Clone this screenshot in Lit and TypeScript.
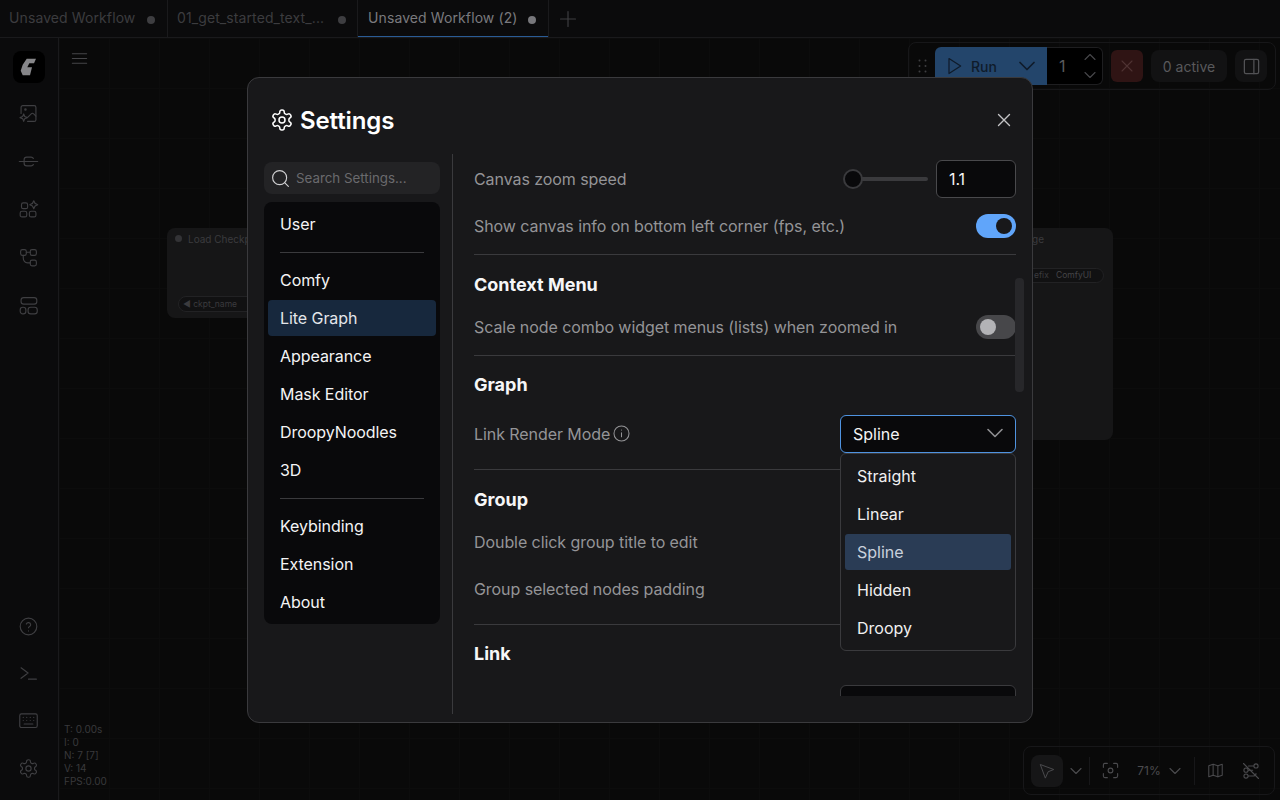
import { LitElement, html, css, svg } from "lit";
import { customElement } from "lit/decorators.js";

const ic = (body: unknown, size = 21, sw = 1.3) => html`<svg class="ic" width=${size} height=${size} viewBox="0 0 24 24" fill="none" stroke="currentColor" stroke-width=${sw} stroke-linecap="round" stroke-linejoin="round">${body}</svg>`;

const gear = svg`<path d="M12.22 2h-.44a2 2 0 0 0-2 2v.18a2 2 0 0 1-1 1.73l-.43.25a2 2 0 0 1-2 0l-.15-.08a2 2 0 0 0-2.73.73l-.22.38a2 2 0 0 0 .73 2.73l.15.1a2 2 0 0 1 1 1.72v.51a2 2 0 0 1-1 1.74l-.15.09a2 2 0 0 0-.73 2.73l.22.38a2 2 0 0 0 2.73.73l.15-.08a2 2 0 0 1 2 0l.43.25a2 2 0 0 1 1 1.73V20a2 2 0 0 0 2 2h.44a2 2 0 0 0 2-2v-.18a2 2 0 0 1 1-1.73l.43-.25a2 2 0 0 1 2 0l.15.08a2 2 0 0 0 2.73-.73l.22-.39a2 2 0 0 0-.73-2.73l-.15-.08a2 2 0 0 1-1-1.74v-.5a2 2 0 0 1 1-1.74l.15-.09a2 2 0 0 0 .73-2.73l-.22-.38a2 2 0 0 0-2.73-.73l-.15.08a2 2 0 0 1-2 0l-.43-.25a2 2 0 0 1-1-1.73V4a2 2 0 0 0-2-2z"/><circle cx="12" cy="12" r="3"/>`;
const chevDown = svg`<path d="m6 9 6 6 6-6"/>`;
const chevUp = svg`<path d="m18 15-6-6-6 6"/>`;
const close = svg`<path d="M18 6 6 18M6 6l12 12"/>`;

const menuGroups = [["User"], ["Comfy", "Lite Graph", "Appearance", "Mask Editor", "DroopyNoodles", "3D"], ["Keybinding", "Extension", "About"]];

@customElement("app-root")
export class AppRoot extends LitElement {
  static styles = css`
    :host { display: block; width: 1280px; height: 800px; overflow: hidden; background: #0a0a0b; font-family: Inter, "Liberation Sans", sans-serif; color: #fff; position: relative; }
    .ic { display: block; flex: none; }
    .page { display: flex; flex-direction: column; height: 800px; }
    .tabs { display: flex; height: 38px; box-sizing: border-box; flex: none; border-bottom: 1px solid #1a1a1c; background: #0b0b0c; align-items: stretch; }
    .tab { display: flex; align-items: center; font-size: 14px; letter-spacing: 0.1px; color: #3c3c3f; padding: 0 0 2px 9px; border-right: 1px solid #1a1a1c; box-sizing: border-box; position: relative; }
    .tab .dot { width: 8px; height: 8px; border-radius: 50%; background: #3e3e41; position: absolute; top: 16px; }
    .tab.t1 { width: 168px; } .t1 .dot { left: 147px; }
    .tab.t2 { width: 190px; } .t2 .dot { left: 170px; }
    .tab.t3 { width: 191px; color: #7a7a7e; padding-left: 10px; box-shadow: inset 0 -1px 0 #2a5c96; } .t3 .dot { left: 170px; background: #77777b; }
    .plus { display: flex; align-items: center; margin-left: 9px; color: #3e3e41; }
    .main { flex: 1; display: flex; min-height: 0; }
    .side { width: 58px; flex: none; border-right: 1px solid #1a1a1c; background: #0b0b0c; display: flex; flex-direction: column; align-items: center; padding: 13px 0 8px; color: #3f3f42; }
    .logo { width: 32px; height: 32px; background: #000; border-radius: 8px; display: flex; align-items: center; justify-content: center; margin-left: -1px; margin-bottom: 6px; }
    .sb { height: 48px; display: flex; align-items: center; justify-content: center; margin-left: -1px; flex: none; }
    .sb.low { height: 47.4px; }
    .spacer { flex: 1; }
    .canvas { flex: 1; position: relative; background-color: #090909; background-image: linear-gradient(#0c0c0c 1px, transparent 1px), linear-gradient(90deg, #0c0c0c 1px, transparent 1px); background-size: 50px 50px; }
    .ham { position: absolute; left: 11px; top: 11px; color: #454548; }
    .node { position: absolute; background: #161617; border-radius: 8px; font-size: 10px; color: #3b3b3e; }
    .n1 { left: 108px; top: 190px; width: 120px; height: 90px; }
    .n1 .ndot { position: absolute; left: 8px; top: 7px; width: 7px; height: 7px; border-radius: 50%; background: #333336; }
    .n1 .title { position: absolute; left: 21px; top: 5px; white-space: nowrap; }
    .n1 .pill { position: absolute; left: 11px; top: 68px; width: 120px; height: 14px; border: 1px solid #222224; border-radius: 8px; background: #111112; line-height: 14px; padding-left: 4px; white-space: nowrap; font-size: 8.5px; }
    .n2 { left: 900px; top: 190px; width: 154px; height: 212px; overflow: hidden; }
    .n2 .title { position: absolute; left: 73px; top: 5px; }
    .n2 .pill { position: absolute; left: 40px; top: 40px; width: 103px; height: 13px; border: 1px solid #222224; border-radius: 8px; background: #111112; line-height: 13px; font-size: 8.5px; white-space: nowrap; }
    .n2 .pill .a { position: absolute; left: 34px; } .n2 .pill .b { position: absolute; left: 56px; color: #454548; }
    .fps { position: absolute; left: 5px; bottom: 12px; font-size: 10px; line-height: 13px; color: #39393c; }
    .toolbar { position: absolute; left: 849px; top: 4px; width: 368px; height: 48px; box-sizing: border-box; border: 1px solid #171719; border-radius: 8px; display: flex; align-items: center; padding: 0 8px; color: #3f3f42; }
    .grip { width: 18px; color: #3e3e41; display: flex; justify-content: center; margin: 0 3px 0 -3px; }
    .run { width: 112px; height: 38px; background: #23456b; border-radius: 6px 0 0 6px; display: flex; align-items: center; color: #0f1b2a; font-size: 14px; font-weight: 500; padding-left: 9px; box-sizing: border-box; position: relative; }
    .run span { margin-left: 7px; }
    .run .cd { position: absolute; right: 6px; top: 5px; }
    .num { width: 56px; height: 38px; box-sizing: border-box; border: 1px solid #1e1e20; border-left: none; border-radius: 0 6px 6px 0; background: #000; display: flex; align-items: center; position: relative; font-size: 16px; color: #5a5a5d; padding-left: 12px; margin-right: 8px; }
    .num .u { position: absolute; right: 2px; top: -1px; color: #47474a; } .num .d { position: absolute; right: 2px; bottom: -1px; color: #47474a; }
    .stop { width: 32px; height: 32px; border-radius: 6px; background: #2f1414; color: #4f3333; display: flex; align-items: center; justify-content: center; margin-right: 8px; }
    .active { width: 76px; height: 32px; border-radius: 8px; background: #121213; font-size: 14px; color: #59595c; display: flex; align-items: center; justify-content: center; margin-right: 8px; }
    .panel { width: 32px; height: 32px; border-radius: 8px; background: #121213; display: flex; align-items: center; justify-content: center; color: #525255; }
    .bottom { position: absolute; left: 964px; top: 708px; width: 252px; height: 49px; box-sizing: border-box; border: 1px solid #171719; border-radius: 8px; display: flex; align-items: center; padding-left: 7px; color: #4b4b4e; font-size: 12px; }
    .pointer { width: 32px; height: 32px; background: #161617; border-radius: 8px; display: flex; align-items: center; justify-content: center; }
    .vr { width: 1px; height: 28px; background: #171719; flex: none; }
    .bitem { display: flex; align-items: center; justify-content: center; flex: none; }
    .w26 { width: 26px; } .w40 { width: 40px; } .w38 { width: 38px; } .w13 { width: 13px; } .w41 { width: 41px; } .w30 { width: 30px; }
    .gap13 { width: 13px; flex: none; }

    .overlay { position: absolute; inset: 0; display: flex; align-items: center; justify-content: center; }
    .dialog { width: 786px; height: 646px; box-sizing: border-box; background: #18181a; border: 1px solid #3a3a3d; border-radius: 12px; display: flex; flex-direction: column; padding: 0 15px 8px 16px; }
    .head { height: 76px; box-sizing: border-box; flex: none; display: flex; align-items: center; gap: 6px; padding: 8px 0 0 6px; color: #fff; font-size: 24px; font-weight: 600; position: relative; letter-spacing: -0.1px; }
    .head .x { position: absolute; right: 2px; top: 31px; color: #c4c4c6; }
    .body { flex: 1; display: flex; min-height: 0; }
    .left { width: 176px; flex: none; padding-top: 8px; display: flex; flex-direction: column; gap: 8px; margin-right: 12px; }
    .search { height: 32px; background: #232325; border-radius: 8px; display: flex; align-items: center; padding-left: 6px; gap: 5px; color: #d0d0d2; font-size: 13.33px; flex: none; }
    .search span { color: #6a6a6d; }
    .menu { background: #09090b; border-radius: 8px; padding: 4px; display: flex; flex-direction: column; }
    .mitem { height: 36px; line-height: 36px; padding-left: 12px; font-size: 16px; letter-spacing: -0.06px; color: #f4f4f5; border-radius: 4px; margin-bottom: 2px; }
    .mitem:last-child { margin-bottom: 0; }
    .mitem.sel { background: #17283d; color: #e4e6ea; }
    .mdiv { height: 1px; background: #3a3a3d; margin: 8px 12px 9px; }
    .vline { width: 1px; background: #3a3a3d; flex: none; }
    .contentwrap { flex: 1; position: relative; min-width: 0; padding-left: 21px; }
    .content { height: 542px; overflow: hidden; width: 542px; }
    .row { display: flex; align-items: center; justify-content: space-between; height: 38px; font-size: 16px; letter-spacing: -0.07px; color: #949497; }
    .r1 { margin-top: 6px; } .r2 { margin-top: 9px; }
    .sep { height: 1px; background: #3a3a3d; }
    .sep.s9 { margin-top: 9px; } .sep.s16 { margin-top: 16px; }
    h3 { margin: 18px 0 0; height: 24px; line-height: 24px; font-size: 18px; font-weight: 700; color: #f6f6f7; }
    h3.b { margin-top: 17px; }
    .row.afterh { margin-top: 11px; } .row.afterselect { margin-top: 18px; } .row.after20 { margin-top: 19px; }
    .lbl { display: flex; align-items: center; gap: 2px; }
    .lbl .ic { margin-top: -2px; }
    .ctrl { display: flex; align-items: center; }
    .slider { width: 75px; height: 4px; background: #3a3a3d; border-radius: 2px; position: relative; margin-right: 8px; }
    .thumb { position: absolute; left: -10px; top: -8px; width: 20px; height: 20px; border-radius: 50%; background: #09090b; border: 2px solid #3a3a3d; box-sizing: border-box; }
    .input { width: 80px; height: 38px; box-sizing: border-box; background: #09090b; border: 1px solid #49494c; border-radius: 6px; color: #f4f4f5; font-size: 16px; line-height: 36px; padding-left: 12px; }
    .toggle { width: 40px; height: 24px; border-radius: 12px; position: relative; background: #47474a; }
    .toggle i { position: absolute; top: 4px; left: 4px; width: 16px; height: 16px; border-radius: 50%; background: #b3b3b6; }
    .toggle.on { background: #60a5fa; }
    .toggle.on i { left: 20px; background: #18181a; }
    .select { width: 176px; height: 38px; box-sizing: border-box; background: #09090b; border: 1px solid #3a3a3d; border-radius: 6px; color: #f4f4f5; font-size: 16px; letter-spacing: 0; display: flex; align-items: center; padding-left: 12px; position: relative; }
    .select.focus { border-color: #4f93e0; }
    .select .ch { position: absolute; right: 6px; top: 3px; color: #8f8f92; }
    .dd { position: absolute; left: 387px; top: 299px; width: 176px; box-sizing: border-box; background: #18181a; border: 1px solid #3a3a3d; border-radius: 6px; padding: 4px; display: flex; flex-direction: column; gap: 2px; }
    .opt { height: 36px; line-height: 36px; padding-left: 12px; font-size: 16px; color: #f0f0f1; border-radius: 3px; }
    .opt.sel { background: #2a3c55; color: #c8d0dc; }
    .scroll { position: absolute; right: -7px; top: 124px; width: 9px; height: 114px; background: #27272a; border-radius: 4px; }
  `;

  render() {
    return html`<div class="page">
      <div class="tabs">
        <div class="tab t1">Unsaved Workflow<span class="dot"></span></div>
        <div class="tab t2">01_get_started_text_...<span class="dot"></span></div>
        <div class="tab t3">Unsaved Workflow (2)<span class="dot"></span></div>
        <div class="plus">${ic(svg`<path d="M12 3v18M3 12h18"/>`, 20, 1.4)}</div>
      </div>
      <div class="main">
        <div class="side">
          <div class="logo"><svg width="18" height="18" viewBox="0 0 18 18"><path fill="#868689" d="M6.7.7H16L14 5.3H9.3L7.3 9.3H12L10 17.3H2.7L.7 12.7 2.7 6.7Z"/></svg></div>
          <div class="sb">${ic(svg`<path d="M3.5 12V5A2 2 0 0 1 5.5 3h13a2 2 0 0 1 2 2v14a2 2 0 0 1-2 2H11"/><circle cx="8.5" cy="7.5" r=".8"/><path d="m20.5 15-2.6-2.6a2 2 0 0 0-2.8 0L11 16.5"/><path d="m6.5 12.5 1.2 3 3 1.2-3 1.2-1.2 3-1.2-3-3-1.2 3-1.2Z"/>`)}</div>
          <div class="sb">${ic(svg`<path d="M1.5 12h5M17.5 12h5M17.5 8.5A3.5 3.5 0 0 0 15 7H10a3 3 0 0 0-3 3v4a3 3 0 0 0 3 3h5a3.5 3.5 0 0 0 2.5-1.5M6.5 12h11"/>`)}</div>
          <div class="sb">${ic(svg`<rect x="4" y="4.5" width="7" height="6.5" rx="2"/><rect x="2.5" y="14" width="7.5" height="6.5" rx="2"/><rect x="13" y="14" width="7.5" height="6.5" rx="2"/><path d="m18 2 1.5 3 3 1.5-3 1.5-1.5 3-1.5-3-3-1.5 3-1.5Z"/>`)}</div>
          <div class="sb">${ic(svg`<rect x="3" y="3" width="6.5" height="6.5" rx="2"/><rect x="14" y="3" width="7" height="6.5" rx="2"/><rect x="14" y="15" width="7" height="6.5" rx="2"/><path d="M9.5 6H14M6 9.5v3a6 6 0 0 0 5 5.7h3"/>`)}</div>
          <div class="sb">${ic(svg`<rect x="3.5" y="3" width="18" height="7.5" rx="3"/><rect x="2.5" y="14" width="6.5" height="7.5" rx="3"/><rect x="11.5" y="14" width="10.5" height="7.5" rx="3"/>`)}</div>
          <div class="spacer"></div>
          <div class="sb low">${ic(svg`<circle cx="12" cy="12" r="9.5"/><path d="M9.5 9.2a2.6 2.6 0 0 1 5 .8c0 1.7-2.5 2.4-2.5 3.4M12 17h.01"/>`)}</div>
          <div class="sb low">${ic(svg`<path d="m3.5 5.5 8 6-8 6M12 18.5h9"/>`)}</div>
          <div class="sb low">${ic(svg`<rect x="2" y="4.5" width="20" height="15.5" rx="2"/><path d="M6 8.5h.01M10 8.5h.01M14 8.5h.01M18 8.5h.01M6 12h.01M10 12h.01M14 12h.01M18 12h.01M7 16h10"/>`)}</div>
          <div class="sb low">${ic(gear)}</div>
        </div>
        <div class="canvas">
          <div class="ham">${ic(svg`<path d="M3 6h18M3 12h18M3 18h18"/>`, 19, 1.4)}</div>
          <div class="node n1"><span class="ndot"></span><span class="title">Load Checkpoint</span><div class="pill">◀ ckpt_name</div></div>
          <div class="node n2"><span class="title">ge</span><div class="pill"><span class="a">efix</span><span class="b">ComfyUI</span></div></div>
          <div class="fps">T: 0.00s<br />I: 0<br />N: 7 [7]<br />V: 14<br />FPS:0.00</div>
          <div class="toolbar">
            <div class="grip"><svg width="10" height="14" viewBox="0 0 10 14" fill="currentColor"><circle cx="1.5" cy="1.5" r="1"/><circle cx="7.5" cy="1.5" r="1"/><circle cx="1.5" cy="7" r="1"/><circle cx="7.5" cy="7" r="1"/><circle cx="1.5" cy="12.5" r="1"/><circle cx="7.5" cy="12.5" r="1"/></svg></div>
            <div class="run">${ic(svg`<path d="m6 3 14 9-14 9Z"/>`, 20, 1.5)}<span>Run</span><div class="cd">${ic(chevDown, 28, 1.5)}</div></div>
            <div class="num">1<div class="u">${ic(chevUp, 20, 1.3)}</div><div class="d">${ic(chevDown, 20, 1.3)}</div></div>
            <div class="stop">${ic(close, 20, 1.3)}</div>
            <div class="active">0 active</div>
            <div class="panel">${ic(svg`<rect x="3" y="3" width="18" height="18" rx="2"/><path d="M15 3v18"/>`, 19, 1.6)}</div>
          </div>
          <div class="bottom">
            <div class="pointer">${ic(svg`<path d="M3.5 3.5 21 10l-7.5 3L10 21Z"/>`, 18, 1.3)}</div>
            <div class="bitem w26">${ic(chevDown, 20, 1.3)}</div>
            <div class="vr"></div>
            <div class="bitem w40">${ic(svg`<path d="M3 8V5a2 2 0 0 1 2-2h3M16 3h3a2 2 0 0 1 2 2v3M21 16v3a2 2 0 0 1-2 2h-3M8 21H5a2 2 0 0 1-2-2v-3"/><circle cx="12" cy="12" r="3"/>`, 19, 1.4)}</div>
            <div class="bitem w38">71%</div>
            <div class="bitem w13">${ic(chevDown, 20, 1.3)}</div>
            <div class="gap13"></div>
            <div class="vr"></div>
            <div class="bitem w41">${ic(svg`<path d="M9 4 3.5 6v14L9 18l6 2 5.5-2V4L15 6Z"/><path d="M9 4v14M15 6v14"/>`, 19, 1.3)}</div>
            <div class="bitem w30">${ic(svg`<path d="m3 3 18 18"/><circle cx="6" cy="18" r="2.5"/><circle cx="18" cy="6" r="2.5"/><circle cx="6" cy="11" r="2.5"/><path d="M9 11h5M9 18h6a3 3 0 0 0 3-3M15 6H9"/>`, 20, 1.3)}</div>
          </div>
        </div>
      </div>
    </div>
    <div class="overlay">
      <div class="dialog">
        <div class="head">${ic(gear, 24, 1.5)}<span>Settings</span><div class="x">${ic(close, 22, 1.5)}</div></div>
        <div class="body">
          <div class="left">
            <div class="search">${ic(svg`<circle cx="11" cy="11" r="8"/><path d="m21 21-4.3-4.3"/>`, 21, 1.3)}<span>Search Settings...</span></div>
            <div class="menu">
              ${menuGroups.map((g, i) => html`${i ? html`<div class="mdiv"></div>` : ""}${g.map((m) => html`<div class="mitem ${m === "Lite Graph" ? "sel" : ""}">${m}</div>`)}`)}
            </div>
          </div>
          <div class="vline"></div>
          <div class="contentwrap">
            <div class="content">
              <div class="row r1">Canvas zoom speed<div class="ctrl"><div class="slider"><div class="thumb"></div></div><div class="input">1.1</div></div></div>
              <div class="row r2">Show canvas info on bottom left corner (fps, etc.)<div class="toggle on"><i></i></div></div>
              <div class="sep s9"></div>
              <h3>Context Menu</h3>
              <div class="row afterh">Scale node combo widget menus (lists) when zoomed in<div class="toggle"><i></i></div></div>
              <div class="sep s9"></div>
              <h3 class="b">Graph</h3>
              <div class="row afterselect"><span class="lbl">Link Render Mode ${ic(svg`<circle cx="12" cy="12" r="9.5"/><path d="M12 16v-5M12 7.5h.01"/>`, 19, 1.3)}</span><div class="select focus">Spline<div class="ch">${ic(chevDown, 28, 1.4)}</div></div></div>
              <div class="sep s16"></div>
              <h3>Group</h3>
              <div class="row afterh">Double click group title to edit</div>
              <div class="row r2">Group selected nodes padding</div>
              <div class="sep s16"></div>
              <h3 class="b">Link</h3>
              <div class="row after20"><span></span><div class="select"></div></div>
            </div>
            <div class="dd">
              ${["Straight", "Linear", "Spline", "Hidden", "Droopy"].map((o) => html`<div class="opt ${o === "Spline" ? "sel" : ""}">${o}</div>`)}
            </div>
            <div class="scroll"></div>
          </div>
        </div>
      </div>
    </div>`;
  }
}
